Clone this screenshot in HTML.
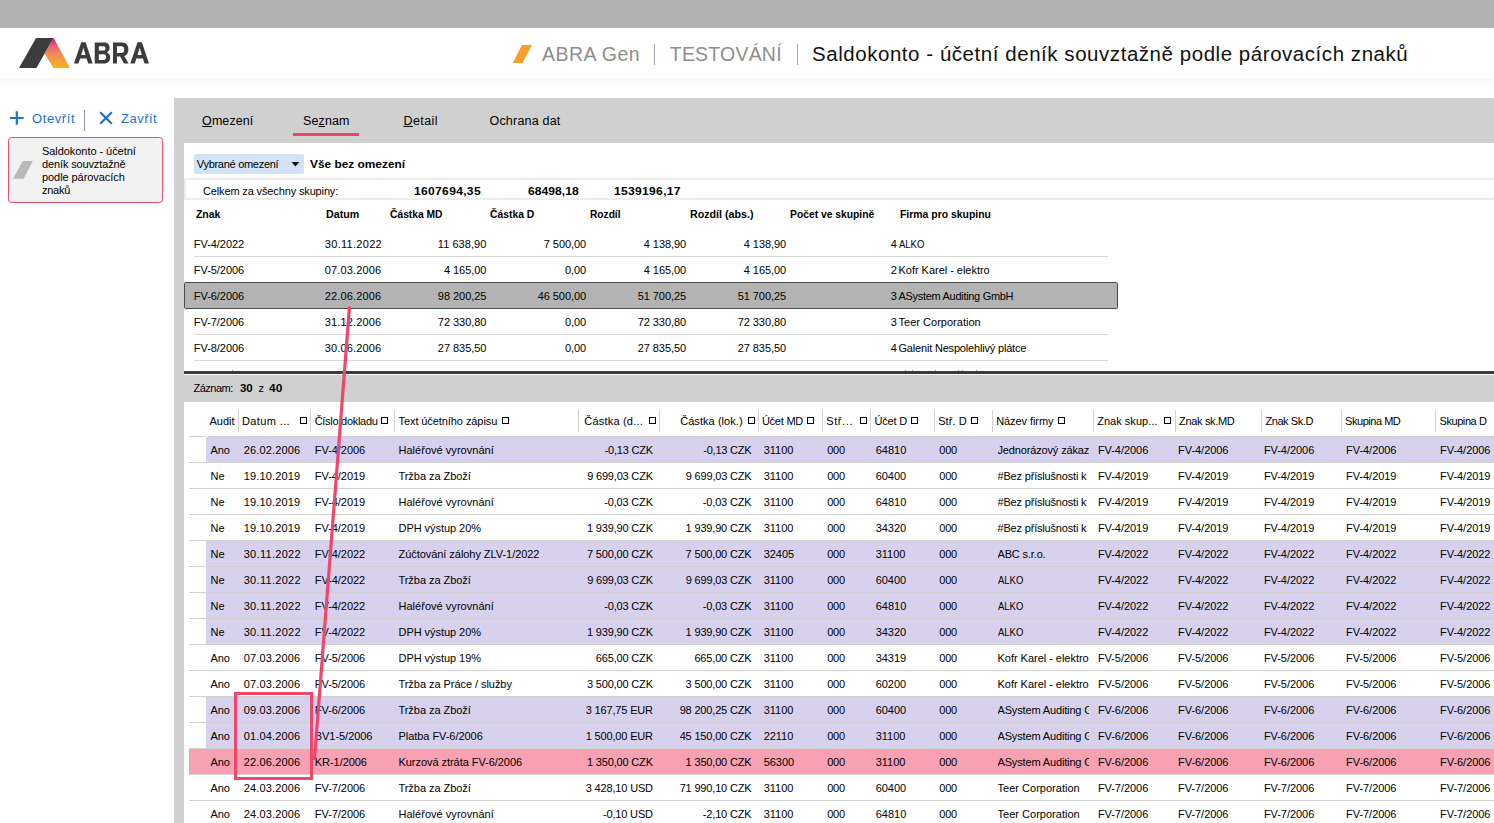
<!DOCTYPE html>
<html lang="cs"><head><meta charset="utf-8"><title>ABRA Gen - Saldokonto</title>
<style>
html,body{margin:0;padding:0;background:#fff;width:1494px;height:823px;overflow:hidden}
#w{width:1494px;height:823px;position:absolute;left:0;top:0;overflow:hidden;font-family:"Liberation Sans",sans-serif;font-size:11px;color:#000}
#s>div,#s>svg,#o>svg{position:absolute}
#t span{position:absolute;white-space:nowrap;line-height:1}
#t span.r{text-align:right}
#t b{font-weight:bold}
u{text-decoration:underline;text-underline-offset:1px}
</style></head><body><div id="w">
<div id="s">
<div style="left:0px;top:0px;width:1494px;height:28px;background:#b2b2b2;"></div>
<div style="left:0;top:78px;width:1494px;height:8px;background:linear-gradient(#f5f5f5,#f9f9f9 40%,#fcfcfc 75%,#fff)"></div>
<svg style="left:0;top:28px" width="180" height="50" viewBox="0 28 180 50">
<defs><linearGradient id="lg" gradientUnits="userSpaceOnUse" x1="0" y1="38" x2="0" y2="68"><stop offset="0" stop-color="#e5007e"/><stop offset="0.1" stop-color="#e72585"/><stop offset="0.3" stop-color="#ea6a74"/><stop offset="0.55" stop-color="#ef8c59"/><stop offset="1" stop-color="#f8b21a"/></linearGradient></defs>
<polygon points="36,38 53.6,38 36.4,68 19,68" fill="#3c3c3c"/>
<polygon points="53.6,38 70,68 53.4,68 44.6,53.4" fill="url(#lg)"/>
</svg>
<svg style="left:70px;top:36px" width="84" height="34" viewBox="70 36 84 34"><g fill="#3c3c3c" fill-rule="evenodd">
<path d="M74,63.6 L81.2,42.3 H85.6 L92.7,63.6 H88.2 L86.6,58.4 H80.1 L78.5,63.6 Z M81.2,54.9 H85.5 L83.4,47.8 Z"/>
<path d="M94.7,42.6 H104.5 C108,42.6 109.6,44.9 109.6,47.8 C109.6,50 108.6,51.6 106.8,52.5 C109,53.3 110.2,55.2 110.2,57.6 C110.2,61 108,63.6 104.2,63.6 H94.7 Z M98.8,46.2 H103.6 C105,46.2 105.5,47.2 105.5,48.4 C105.5,49.6 104.8,50.6 103.6,50.6 H98.8 Z M98.8,54.2 H104 C105.4,54.2 106.1,55.5 106.1,57.1 C106.1,58.8 105.3,60 103.9,60 H98.8 Z"/>
<path d="M113,42.6 H122.4 C126.2,42.6 128.4,45.4 128.4,49.5 C128.4,52.8 126.8,55.2 124.2,56.1 L128.7,63.6 H124 L120.1,56.6 H117 V63.6 H113 Z M117,46.2 H121.8 C123.4,46.2 124.2,47.6 124.2,49.5 C124.2,51.6 123.3,53 121.8,53 H117 Z"/>
<path transform="translate(56.3 0)" d="M74,63.6 L81.2,42.3 H85.6 L92.7,63.6 H88.2 L86.6,58.4 H80.1 L78.5,63.6 Z M81.2,54.9 H85.5 L83.4,47.8 Z"/>
</g></svg>
<svg style="left:510px;top:44px" width="24" height="20" viewBox="510 44 24 20"><polygon points="521.9,45 531.9,45 522.4,62.9 512.8,62.9" fill="#fc9c2e"/></svg>
<div style="left:654px;top:44px;width:1px;height:21px;background:#a3a3bd;"></div>
<div style="left:797px;top:44px;width:1px;height:21px;background:#a3a3bd;"></div>
<svg style="left:8px;top:108px" width="110" height="24" viewBox="8 108 110 24"><g stroke="#1f72d0" stroke-width="2.2" fill="none"><path d="M10 118H23.6M16.8 111.2V124.8"/><path d="M100.2 112.2L111.8 123.8M111.8 112.2L100.2 123.8"/></g></svg>
<div style="left:84px;top:110px;width:1px;height:21px;background:#8f8fc9;"></div>
<div style="left:8px;top:137px;width:153px;height:64px;background:#f2f2f2;border:1px solid #ea4c6c;border-radius:3.5px"></div>
<svg style="left:12px;top:160px" width="24" height="20" viewBox="12 160 24 20"><polygon points="22.6,161 32.9,161 23.6,178.8 13,178.8" fill="#b9b9b9"/></svg>
<div style="left:174px;top:98px;width:1320px;height:725px;background:#d0d0d0;"></div>
<div style="left:293px;top:133px;width:66px;height:3px;background:#ed4469;"></div>
<div style="left:184px;top:143px;width:1310px;height:232px;background:#fff;"></div>
<div style="left:194px;top:154px;width:110px;height:20px;background:#d3e3f5;border-radius:2px"></div>
<svg style="left:289px;top:160px" width="12" height="8" viewBox="289 160 12 8"><polygon points="291.5,162 299.3,162 295.4,166.5" fill="#111"/></svg>
<div style="left:184px;top:178px;width:1310px;height:2px;background:#edebec;"></div>
<div style="left:184px;top:198px;width:1310px;height:2px;background:#edebec;"></div>
<div style="left:184px;top:180px;width:2px;height:18px;background:#edebec;"></div>
<div style="left:194px;top:256px;width:914px;height:1px;background:#d8d8d8;"></div>
<div style="left:194px;top:282px;width:914px;height:1px;background:#d8d8d8;"></div>
<div style="left:184px;top:282px;width:932px;height:25px;background:#b3b3b3;border:1px solid #4a4a4a;border-radius:1.5px"></div>
<div style="left:194px;top:334px;width:914px;height:1px;background:#d8d8d8;"></div>
<div style="left:194px;top:360px;width:914px;height:1px;background:#d8d8d8;"></div>
<div style="left:194px;top:361px;width:914px;height:10px;overflow:hidden"><span style="position:absolute;left:0.3px;top:8.4px;font-size:11px;line-height:13px;white-space:nowrap">FV-9/2006</span><span style="position:absolute;left:131px;top:8.4px;font-size:11px;line-height:13px;white-space:nowrap">30.06.2006</span><span style="position:absolute;left:705px;top:8.4px;font-size:11px;line-height:13px;white-space:nowrap">Kofr Karel - elektro</span></div>
<div style="left:232px;top:370px;width:1px;height:1px;background:#9a9a9a;"></div>
<div style="left:905px;top:370px;width:1px;height:1px;background:#9a9a9a;"></div>
<div style="left:912px;top:370px;width:1px;height:1px;background:#9a9a9a;"></div>
<div style="left:935px;top:370px;width:1px;height:1px;background:#9a9a9a;"></div>
<div style="left:958px;top:370px;width:1px;height:1px;background:#9a9a9a;"></div>
<div style="left:962px;top:370px;width:1px;height:1px;background:#9a9a9a;"></div>
<div style="left:976px;top:370px;width:1px;height:1px;background:#9a9a9a;"></div>
<div style="left:184px;top:371px;width:1310px;height:3px;background:#3b3b3b;"></div>
<div style="left:184px;top:402px;width:1310px;height:421px;background:#fff;"></div>
<div style="left:238px;top:410px;width:1px;height:22px;background:#d2d2d2;"></div>
<div style="left:310px;top:410px;width:1px;height:22px;background:#d2d2d2;"></div>
<div style="left:394px;top:410px;width:1px;height:22px;background:#d2d2d2;"></div>
<div style="left:578px;top:410px;width:1px;height:22px;background:#d2d2d2;"></div>
<div style="left:659px;top:410px;width:1px;height:22px;background:#d2d2d2;"></div>
<div style="left:758px;top:410px;width:1px;height:22px;background:#d2d2d2;"></div>
<div style="left:822px;top:410px;width:1px;height:22px;background:#d2d2d2;"></div>
<div style="left:870px;top:410px;width:1px;height:22px;background:#d2d2d2;"></div>
<div style="left:934px;top:410px;width:1px;height:22px;background:#d2d2d2;"></div>
<div style="left:992px;top:410px;width:1px;height:22px;background:#d2d2d2;"></div>
<div style="left:1093px;top:410px;width:1px;height:22px;background:#d2d2d2;"></div>
<div style="left:1175px;top:410px;width:1px;height:22px;background:#d2d2d2;"></div>
<div style="left:1261px;top:410px;width:1px;height:22px;background:#d2d2d2;"></div>
<div style="left:1341px;top:410px;width:1px;height:22px;background:#d2d2d2;"></div>
<div style="left:1435px;top:410px;width:1px;height:22px;background:#d2d2d2;"></div>
<div style="left:300px;top:417px;width:5px;height:5px;border:1px solid #000;background:#fff"></div>
<div style="left:381px;top:417px;width:5px;height:5px;border:1px solid #000;background:#fff"></div>
<div style="left:502px;top:417px;width:5px;height:5px;border:1px solid #000;background:#fff"></div>
<div style="left:649px;top:417px;width:5px;height:5px;border:1px solid #000;background:#fff"></div>
<div style="left:748px;top:417px;width:5px;height:5px;border:1px solid #000;background:#fff"></div>
<div style="left:807px;top:417px;width:5px;height:5px;border:1px solid #000;background:#fff"></div>
<div style="left:860px;top:417px;width:5px;height:5px;border:1px solid #000;background:#fff"></div>
<div style="left:911px;top:417px;width:5px;height:5px;border:1px solid #000;background:#fff"></div>
<div style="left:971px;top:417px;width:5px;height:5px;border:1px solid #000;background:#fff"></div>
<div style="left:1058px;top:417px;width:5px;height:5px;border:1px solid #000;background:#fff"></div>
<div style="left:1164px;top:417px;width:5px;height:5px;border:1px solid #000;background:#fff"></div>
<div style="left:189px;top:436px;width:17px;height:1px;background:#cfcfcf;"></div>
<div style="left:208px;top:436px;width:1286px;height:1px;background:#cfcfcf;"></div>
<div style="left:206px;top:437px;width:1288px;height:25px;background:#d7d1ed;"></div>
<div style="left:189px;top:462px;width:1305px;height:1px;background:#d1d1d1;"></div>
<div style="left:189px;top:488px;width:1305px;height:1px;background:#d1d1d1;"></div>
<div style="left:189px;top:514px;width:1305px;height:1px;background:#d1d1d1;"></div>
<div style="left:189px;top:540px;width:1305px;height:1px;background:#d1d1d1;"></div>
<div style="left:206px;top:541px;width:1288px;height:25px;background:#d7d1ed;"></div>
<div style="left:189px;top:566px;width:1305px;height:1px;background:#d1d1d1;"></div>
<div style="left:206px;top:567px;width:1288px;height:25px;background:#d7d1ed;"></div>
<div style="left:189px;top:592px;width:1305px;height:1px;background:#d1d1d1;"></div>
<div style="left:206px;top:593px;width:1288px;height:25px;background:#d7d1ed;"></div>
<div style="left:189px;top:618px;width:1305px;height:1px;background:#d1d1d1;"></div>
<div style="left:206px;top:619px;width:1288px;height:25px;background:#d7d1ed;"></div>
<div style="left:189px;top:644px;width:1305px;height:1px;background:#d1d1d1;"></div>
<div style="left:189px;top:670px;width:1305px;height:1px;background:#d1d1d1;"></div>
<div style="left:189px;top:696px;width:1305px;height:1px;background:#d1d1d1;"></div>
<div style="left:206px;top:697px;width:1288px;height:25px;background:#d7d1ed;"></div>
<div style="left:189px;top:722px;width:1305px;height:1px;background:#d1d1d1;"></div>
<div style="left:206px;top:723px;width:1288px;height:25px;background:#d7d1ed;"></div>
<div style="left:189px;top:748px;width:1305px;height:1px;background:#d1d1d1;"></div>
<div style="left:189px;top:749px;width:1305px;height:25px;background:#f7a1b2;"></div>
<div style="left:189px;top:774px;width:1305px;height:1px;background:#d1d1d1;"></div>
<div style="left:189px;top:800px;width:1305px;height:1px;background:#d1d1d1;"></div>
<div style="left:189px;top:826px;width:1305px;height:1px;background:#d1d1d1;"></div>
</div>
<div id="t">
<span style="top:45px;left:541.90px;font-size:19.5px;color:#8e8e8e;letter-spacing:0.486px">ABRA Gen</span>
<span style="top:45px;left:669.80px;font-size:19.5px;color:#8e8e8e;letter-spacing:0.200px">TESTOVÁNÍ</span>
<span style="top:45px;left:812.25px;font-size:19.5px;color:#111;letter-spacing:0.530px;transform:scaleX(1.05);transform-origin:0 0">Saldokonto - účetní deník souvztažně podle párovacích znaků</span>
<span style="top:112px;left:32.00px;font-size:13px;color:#1f72d0;letter-spacing:0.600px">Otevřít</span>
<span style="top:112px;left:121.00px;font-size:13px;color:#1f72d0;letter-spacing:0.500px">Zavřít</span>
<span style="top:146px;left:42.00px;letter-spacing:-0.056px">Saldokonto - účetní</span>
<span style="top:159px;left:42.00px;letter-spacing:-0.133px">deník souvztažně</span>
<span style="top:172px;left:42.00px;letter-spacing:-0.067px">podle párovacích</span>
<span style="top:185px;left:42.00px;letter-spacing:-0.250px">znaků</span>
<span style="top:115px;left:202.10px;font-size:12.5px;letter-spacing:0.067px"><u>O</u>mezení</span>
<span style="top:115px;left:303.00px;font-size:12.5px;letter-spacing:0.120px">Se<u>z</u>nam</span>
<span style="top:115px;left:403.50px;font-size:12.5px;letter-spacing:0.400px"><u>D</u>etail</span>
<span style="top:115px;left:489.50px;font-size:12.5px;letter-spacing:0.200px">Ochrana dat</span>
<span style="top:159px;left:196.80px;letter-spacing:-0.286px">Vybrané omezení</span>
<span style="top:159px;left:309.50px;font-weight:bold;transform:scaleX(1.08);transform-origin:0 0">Vše bez omezení</span>
<span style="top:186px;left:203.00px;letter-spacing:-0.140px">Celkem za všechny skupiny:</span>
<span style="top:186px;left:414.10px;font-weight:bold;letter-spacing:0.273px;transform:scaleX(1.1);transform-origin:0 0">1607694,35</span>
<span style="top:186px;left:528.20px;font-weight:bold;letter-spacing:0.026px;transform:scaleX(1.1);transform-origin:0 0">68498,18</span>
<span style="top:186px;left:613.80px;font-weight:bold;letter-spacing:0.263px;transform:scaleX(1.1);transform-origin:0 0">1539196,17</span>
<span style="top:210px;left:195.50px;font-size:10px;font-weight:bold;transform:scaleX(1.043);transform-origin:0 0">Znak</span>
<span style="top:210px;left:325.50px;font-size:10px;font-weight:bold;transform:scaleX(1.067);transform-origin:0 0">Datum</span>
<span style="top:210px;left:389.90px;font-size:10px;font-weight:bold;transform:scaleX(1.027);transform-origin:0 0">Částka MD</span>
<span style="top:210px;left:489.90px;font-size:10px;font-weight:bold;transform:scaleX(1.033);transform-origin:0 0">Částka D</span>
<span style="top:210px;left:589.80px;font-size:10px;font-weight:bold;transform:scaleX(1.017);transform-origin:0 0">Rozdíl</span>
<span style="top:210px;left:689.90px;font-size:10px;font-weight:bold;transform:scaleX(1.069);transform-origin:0 0">Rozdíl (abs.)</span>
<span style="top:210px;left:790.00px;font-size:10px;font-weight:bold;transform:scaleX(1.031);transform-origin:0 0">Počet ve skupině</span>
<span style="top:210px;left:899.50px;font-size:10px;font-weight:bold;transform:scaleX(1.042);transform-origin:0 0">Firma pro skupinu</span>
<span style="top:239px;left:193.80px;letter-spacing:-0.050px">FV-4/2022</span>
<span style="top:239px;left:324.80px;letter-spacing:0.300px">30.11.2022</span>
<span style="top:239px;right:1007.54px;letter-spacing:0.062px">11 638,90</span>
<span style="top:239px;right:907.85px;letter-spacing:-0.050px">7 500,00</span>
<span style="top:239px;right:807.85px;letter-spacing:-0.050px">4 138,90</span>
<span style="top:239px;right:707.85px;letter-spacing:-0.050px">4 138,90</span>
<span style="top:239px;left:890.70px;letter-spacing:-0.050px">4</span>
<span style="top:239px;left:898.50px;transform:scaleX(0.862);transform-origin:0 0">ALKO</span>
<span style="top:265px;left:193.80px;letter-spacing:-0.050px">FV-5/2006</span>
<span style="top:265px;left:324.80px;letter-spacing:0.150px">07.03.2006</span>
<span style="top:265px;right:1007.65px;letter-spacing:-0.050px">4 165,00</span>
<span style="top:265px;right:907.85px;letter-spacing:-0.050px">0,00</span>
<span style="top:265px;right:807.85px;letter-spacing:-0.050px">4 165,00</span>
<span style="top:265px;right:707.85px;letter-spacing:-0.050px">4 165,00</span>
<span style="top:265px;left:890.70px;letter-spacing:-0.050px">2</span>
<span style="top:265px;left:898.50px;letter-spacing:-0.026px">Kofr Karel - elektro</span>
<span style="top:291px;left:193.80px;letter-spacing:-0.050px">FV-6/2006</span>
<span style="top:291px;left:324.80px;letter-spacing:0.150px">22.06.2006</span>
<span style="top:291px;right:1007.65px;letter-spacing:-0.050px">98 200,25</span>
<span style="top:291px;right:907.85px;letter-spacing:-0.050px">46 500,00</span>
<span style="top:291px;right:807.85px;letter-spacing:-0.050px">51 700,25</span>
<span style="top:291px;right:707.85px;letter-spacing:-0.050px">51 700,25</span>
<span style="top:291px;left:890.70px;letter-spacing:-0.050px">3</span>
<span style="top:291px;left:898.50px;letter-spacing:-0.300px">ASystem Auditing GmbH</span>
<span style="top:317px;left:193.80px;letter-spacing:-0.050px">FV-7/2006</span>
<span style="top:317px;left:324.80px;letter-spacing:0.150px">31.12.2006</span>
<span style="top:317px;right:1007.65px;letter-spacing:-0.050px">72 330,80</span>
<span style="top:317px;right:907.85px;letter-spacing:-0.050px">0,00</span>
<span style="top:317px;right:807.85px;letter-spacing:-0.050px">72 330,80</span>
<span style="top:317px;right:707.85px;letter-spacing:-0.050px">72 330,80</span>
<span style="top:317px;left:890.70px;letter-spacing:-0.050px">3</span>
<span style="top:317px;left:898.50px;letter-spacing:0.020px">Teer Corporation</span>
<span style="top:343px;left:193.80px;letter-spacing:-0.050px">FV-8/2006</span>
<span style="top:343px;left:324.80px;letter-spacing:0.150px">30.06.2006</span>
<span style="top:343px;right:1007.65px;letter-spacing:-0.050px">27 835,50</span>
<span style="top:343px;right:907.85px;letter-spacing:-0.050px">0,00</span>
<span style="top:343px;right:807.85px;letter-spacing:-0.050px">27 835,50</span>
<span style="top:343px;right:707.85px;letter-spacing:-0.050px">27 835,50</span>
<span style="top:343px;left:890.70px;letter-spacing:-0.050px">4</span>
<span style="top:343px;left:898.50px;letter-spacing:-0.185px">Galenit Nespolehlivý plátce</span>
<span style="top:383px;left:193.50px;letter-spacing:-0.500px">Záznam:</span>
<span style="top:383px;left:239.50px;font-weight:bold;transform:scaleX(1.042);transform-origin:0 0">30</span>
<span style="top:383px;left:258.50px;letter-spacing:-0.500px">z</span>
<span style="top:383px;left:268.50px;font-weight:bold;transform:scaleX(1.083);transform-origin:0 0">40</span>
<span style="top:416px;left:209.50px">Audit</span>
<span style="top:416px;left:242.00px;letter-spacing:0.375px">Datum ...</span>
<span style="top:416px;left:314.70px;letter-spacing:-0.292px">Číslo dokladu</span>
<span style="top:416px;left:398.50px;letter-spacing:-0.079px">Text účetního zápisu</span>
<span style="top:416px;left:584.30px;letter-spacing:0.200px">Částka (d...</span>
<span style="top:416px;left:680.20px;letter-spacing:0.058px">Částka (lok.)</span>
<span style="top:416px;left:761.90px;letter-spacing:-0.233px">Účet MD</span>
<span style="top:416px;left:826.20px;letter-spacing:0.620px">Stř...</span>
<span style="top:416px;left:874.50px;letter-spacing:-0.200px">Účet D</span>
<span style="top:416px;left:938.20px;letter-spacing:0.100px">Stř. D</span>
<span style="top:416px;left:996.20px;letter-spacing:-0.070px">Název firmy</span>
<span style="top:416px;left:1097.20px;letter-spacing:0.027px">Znak skup...</span>
<span style="top:416px;left:1179.10px;letter-spacing:-0.333px">Znak sk.MD</span>
<span style="top:416px;left:1265.40px;letter-spacing:-0.425px">Znak Sk.D</span>
<span style="top:416px;left:1345.10px;letter-spacing:-0.467px">Skupina MD</span>
<span style="top:416px;left:1439.50px;letter-spacing:-0.425px">Skupina D</span>
<span style="top:445px;left:210.50px;letter-spacing:-0.050px">Ano</span>
<span style="top:445px;left:243.70px;letter-spacing:0.150px">26.02.2006</span>
<span style="top:445px;left:314.80px;letter-spacing:-0.050px">FV-4/2006</span>
<span style="top:445px;left:398.50px;letter-spacing:0.029px">Haléřové vyrovnání</span>
<span style="top:445px;right:841.23px;letter-spacing:-0.225px">-0,13 CZK</span>
<span style="top:445px;right:742.62px;letter-spacing:-0.225px">-0,13 CZK</span>
<span style="top:445px;left:763.70px">31100</span>
<span style="top:445px;left:827.20px;letter-spacing:-0.250px">000</span>
<span style="top:445px;left:875.70px">64810</span>
<span style="top:445px;left:939.30px;letter-spacing:-0.250px">000</span>
<span style="top:445px;left:997.50px;letter-spacing:-0.150px;width:91.6px;overflow:hidden">Jednorázový zákaz</span>
<span style="top:445px;left:1097.90px;letter-spacing:-0.050px">FV-4/2006</span>
<span style="top:445px;left:1178.10px;letter-spacing:-0.050px">FV-4/2006</span>
<span style="top:445px;left:1263.90px;letter-spacing:-0.050px">FV-4/2006</span>
<span style="top:445px;left:1346.10px;letter-spacing:-0.050px">FV-4/2006</span>
<span style="top:445px;left:1440.10px;letter-spacing:-0.050px">FV-4/2006</span>
<span style="top:471px;left:210.50px;letter-spacing:-0.050px">Ne</span>
<span style="top:471px;left:243.70px;letter-spacing:0.150px">19.10.2019</span>
<span style="top:471px;left:314.80px;letter-spacing:-0.050px">FV-4/2019</span>
<span style="top:471px;left:398.50px;letter-spacing:-0.050px">Tržba za Zboží</span>
<span style="top:471px;right:841.19px;letter-spacing:-0.191px">9 699,03 CZK</span>
<span style="top:471px;right:742.59px;letter-spacing:-0.191px">9 699,03 CZK</span>
<span style="top:471px;left:763.70px">31100</span>
<span style="top:471px;left:827.20px;letter-spacing:-0.250px">000</span>
<span style="top:471px;left:875.70px;letter-spacing:-0.050px">60400</span>
<span style="top:471px;left:939.30px;letter-spacing:-0.250px">000</span>
<span style="top:471px;left:997.50px;letter-spacing:-0.183px;width:91.6px;overflow:hidden">#Bez příslušnosti k</span>
<span style="top:471px;left:1097.90px;letter-spacing:-0.050px">FV-4/2019</span>
<span style="top:471px;left:1178.10px;letter-spacing:-0.050px">FV-4/2019</span>
<span style="top:471px;left:1263.90px;letter-spacing:-0.050px">FV-4/2019</span>
<span style="top:471px;left:1346.10px;letter-spacing:-0.050px">FV-4/2019</span>
<span style="top:471px;left:1440.10px;letter-spacing:-0.050px">FV-4/2019</span>
<span style="top:497px;left:210.50px;letter-spacing:-0.050px">Ne</span>
<span style="top:497px;left:243.70px;letter-spacing:0.150px">19.10.2019</span>
<span style="top:497px;left:314.80px;letter-spacing:-0.050px">FV-4/2019</span>
<span style="top:497px;left:398.50px;letter-spacing:0.029px">Haléřové vyrovnání</span>
<span style="top:497px;right:841.17px;letter-spacing:-0.170px">-0,03 CZK</span>
<span style="top:497px;right:742.57px;letter-spacing:-0.170px">-0,03 CZK</span>
<span style="top:497px;left:763.70px">31100</span>
<span style="top:497px;left:827.20px;letter-spacing:-0.250px">000</span>
<span style="top:497px;left:875.70px">64810</span>
<span style="top:497px;left:939.30px;letter-spacing:-0.250px">000</span>
<span style="top:497px;left:997.50px;letter-spacing:-0.183px;width:91.6px;overflow:hidden">#Bez příslušnosti k</span>
<span style="top:497px;left:1097.90px;letter-spacing:-0.050px">FV-4/2019</span>
<span style="top:497px;left:1178.10px;letter-spacing:-0.050px">FV-4/2019</span>
<span style="top:497px;left:1263.90px;letter-spacing:-0.050px">FV-4/2019</span>
<span style="top:497px;left:1346.10px;letter-spacing:-0.050px">FV-4/2019</span>
<span style="top:497px;left:1440.10px;letter-spacing:-0.050px">FV-4/2019</span>
<span style="top:523px;left:210.50px;letter-spacing:-0.050px">Ne</span>
<span style="top:523px;left:243.70px;letter-spacing:0.150px">19.10.2019</span>
<span style="top:523px;left:314.80px;letter-spacing:-0.050px">FV-4/2019</span>
<span style="top:523px;left:398.50px;letter-spacing:-0.050px">DPH výstup 20%</span>
<span style="top:523px;right:841.17px;letter-spacing:-0.170px">1 939,90 CZK</span>
<span style="top:523px;right:742.57px;letter-spacing:-0.170px">1 939,90 CZK</span>
<span style="top:523px;left:763.70px">31100</span>
<span style="top:523px;left:827.20px;letter-spacing:-0.250px">000</span>
<span style="top:523px;left:875.70px;letter-spacing:-0.050px">34320</span>
<span style="top:523px;left:939.30px;letter-spacing:-0.250px">000</span>
<span style="top:523px;left:997.50px;letter-spacing:-0.183px;width:91.6px;overflow:hidden">#Bez příslušnosti k</span>
<span style="top:523px;left:1097.90px;letter-spacing:-0.050px">FV-4/2019</span>
<span style="top:523px;left:1178.10px;letter-spacing:-0.050px">FV-4/2019</span>
<span style="top:523px;left:1263.90px;letter-spacing:-0.050px">FV-4/2019</span>
<span style="top:523px;left:1346.10px;letter-spacing:-0.050px">FV-4/2019</span>
<span style="top:523px;left:1440.10px;letter-spacing:-0.050px">FV-4/2019</span>
<span style="top:549px;left:210.50px;letter-spacing:-0.050px">Ne</span>
<span style="top:549px;left:243.70px;letter-spacing:0.300px">30.11.2022</span>
<span style="top:549px;left:314.80px;letter-spacing:-0.050px">FV-4/2022</span>
<span style="top:549px;left:398.50px;letter-spacing:-0.050px">Zúčtování zálohy ZLV-1/2022</span>
<span style="top:549px;right:841.17px;letter-spacing:-0.170px">7 500,00 CZK</span>
<span style="top:549px;right:742.57px;letter-spacing:-0.170px">7 500,00 CZK</span>
<span style="top:549px;left:763.70px;letter-spacing:-0.050px">32405</span>
<span style="top:549px;left:827.20px;letter-spacing:-0.250px">000</span>
<span style="top:549px;left:875.70px">31100</span>
<span style="top:549px;left:939.30px;letter-spacing:-0.250px">000</span>
<span style="top:549px;left:997.50px;letter-spacing:-0.150px;width:91.6px;overflow:hidden">ABC s.r.o.</span>
<span style="top:549px;left:1097.90px;letter-spacing:-0.050px">FV-4/2022</span>
<span style="top:549px;left:1178.10px;letter-spacing:-0.050px">FV-4/2022</span>
<span style="top:549px;left:1263.90px;letter-spacing:-0.050px">FV-4/2022</span>
<span style="top:549px;left:1346.10px;letter-spacing:-0.050px">FV-4/2022</span>
<span style="top:549px;left:1440.10px;letter-spacing:-0.050px">FV-4/2022</span>
<span style="top:575px;left:210.50px;letter-spacing:-0.050px">Ne</span>
<span style="top:575px;left:243.70px;letter-spacing:0.300px">30.11.2022</span>
<span style="top:575px;left:314.80px;letter-spacing:-0.050px">FV-4/2022</span>
<span style="top:575px;left:398.50px;letter-spacing:-0.050px">Tržba za Zboží</span>
<span style="top:575px;right:841.19px;letter-spacing:-0.191px">9 699,03 CZK</span>
<span style="top:575px;right:742.59px;letter-spacing:-0.191px">9 699,03 CZK</span>
<span style="top:575px;left:763.70px">31100</span>
<span style="top:575px;left:827.20px;letter-spacing:-0.250px">000</span>
<span style="top:575px;left:875.70px;letter-spacing:-0.050px">60400</span>
<span style="top:575px;left:939.30px;letter-spacing:-0.250px">000</span>
<span style="top:575px;left:997.50px;transform:scaleX(0.862);transform-origin:0 0;width:91.6px;overflow:hidden">ALKO</span>
<span style="top:575px;left:1097.90px;letter-spacing:-0.050px">FV-4/2022</span>
<span style="top:575px;left:1178.10px;letter-spacing:-0.050px">FV-4/2022</span>
<span style="top:575px;left:1263.90px;letter-spacing:-0.050px">FV-4/2022</span>
<span style="top:575px;left:1346.10px;letter-spacing:-0.050px">FV-4/2022</span>
<span style="top:575px;left:1440.10px;letter-spacing:-0.050px">FV-4/2022</span>
<span style="top:601px;left:210.50px;letter-spacing:-0.050px">Ne</span>
<span style="top:601px;left:243.70px;letter-spacing:0.300px">30.11.2022</span>
<span style="top:601px;left:314.80px;letter-spacing:-0.050px">FV-4/2022</span>
<span style="top:601px;left:398.50px;letter-spacing:0.029px">Haléřové vyrovnání</span>
<span style="top:601px;right:841.17px;letter-spacing:-0.170px">-0,03 CZK</span>
<span style="top:601px;right:742.57px;letter-spacing:-0.170px">-0,03 CZK</span>
<span style="top:601px;left:763.70px">31100</span>
<span style="top:601px;left:827.20px;letter-spacing:-0.250px">000</span>
<span style="top:601px;left:875.70px">64810</span>
<span style="top:601px;left:939.30px;letter-spacing:-0.250px">000</span>
<span style="top:601px;left:997.50px;transform:scaleX(0.862);transform-origin:0 0;width:91.6px;overflow:hidden">ALKO</span>
<span style="top:601px;left:1097.90px;letter-spacing:-0.050px">FV-4/2022</span>
<span style="top:601px;left:1178.10px;letter-spacing:-0.050px">FV-4/2022</span>
<span style="top:601px;left:1263.90px;letter-spacing:-0.050px">FV-4/2022</span>
<span style="top:601px;left:1346.10px;letter-spacing:-0.050px">FV-4/2022</span>
<span style="top:601px;left:1440.10px;letter-spacing:-0.050px">FV-4/2022</span>
<span style="top:627px;left:210.50px;letter-spacing:-0.050px">Ne</span>
<span style="top:627px;left:243.70px;letter-spacing:0.300px">30.11.2022</span>
<span style="top:627px;left:314.80px;letter-spacing:-0.050px">FV-4/2022</span>
<span style="top:627px;left:398.50px;letter-spacing:-0.050px">DPH výstup 20%</span>
<span style="top:627px;right:841.17px;letter-spacing:-0.170px">1 939,90 CZK</span>
<span style="top:627px;right:742.57px;letter-spacing:-0.170px">1 939,90 CZK</span>
<span style="top:627px;left:763.70px">31100</span>
<span style="top:627px;left:827.20px;letter-spacing:-0.250px">000</span>
<span style="top:627px;left:875.70px;letter-spacing:-0.050px">34320</span>
<span style="top:627px;left:939.30px;letter-spacing:-0.250px">000</span>
<span style="top:627px;left:997.50px;transform:scaleX(0.862);transform-origin:0 0;width:91.6px;overflow:hidden">ALKO</span>
<span style="top:627px;left:1097.90px;letter-spacing:-0.050px">FV-4/2022</span>
<span style="top:627px;left:1178.10px;letter-spacing:-0.050px">FV-4/2022</span>
<span style="top:627px;left:1263.90px;letter-spacing:-0.050px">FV-4/2022</span>
<span style="top:627px;left:1346.10px;letter-spacing:-0.050px">FV-4/2022</span>
<span style="top:627px;left:1440.10px;letter-spacing:-0.050px">FV-4/2022</span>
<span style="top:653px;left:210.50px;letter-spacing:-0.050px">Ano</span>
<span style="top:653px;left:243.70px;letter-spacing:0.150px">07.03.2006</span>
<span style="top:653px;left:314.80px;letter-spacing:-0.050px">FV-5/2006</span>
<span style="top:653px;left:398.50px;letter-spacing:-0.050px">DPH výstup 19%</span>
<span style="top:653px;right:841.17px;letter-spacing:-0.170px">665,00 CZK</span>
<span style="top:653px;right:742.57px;letter-spacing:-0.170px">665,00 CZK</span>
<span style="top:653px;left:763.70px">31100</span>
<span style="top:653px;left:827.20px;letter-spacing:-0.250px">000</span>
<span style="top:653px;left:875.70px;letter-spacing:-0.050px">34319</span>
<span style="top:653px;left:939.30px;letter-spacing:-0.250px">000</span>
<span style="top:653px;left:997.50px;letter-spacing:-0.026px;width:91.6px;overflow:hidden">Kofr Karel - elektro</span>
<span style="top:653px;left:1097.90px;letter-spacing:-0.050px">FV-5/2006</span>
<span style="top:653px;left:1178.10px;letter-spacing:-0.050px">FV-5/2006</span>
<span style="top:653px;left:1263.90px;letter-spacing:-0.050px">FV-5/2006</span>
<span style="top:653px;left:1346.10px;letter-spacing:-0.050px">FV-5/2006</span>
<span style="top:653px;left:1440.10px;letter-spacing:-0.050px">FV-5/2006</span>
<span style="top:679px;left:210.50px;letter-spacing:-0.050px">Ano</span>
<span style="top:679px;left:243.70px;letter-spacing:0.150px">07.03.2006</span>
<span style="top:679px;left:314.80px;letter-spacing:-0.050px">FV-5/2006</span>
<span style="top:679px;left:398.50px;letter-spacing:-0.050px">Tržba za Práce / služby</span>
<span style="top:679px;right:841.17px;letter-spacing:-0.170px">3 500,00 CZK</span>
<span style="top:679px;right:742.57px;letter-spacing:-0.170px">3 500,00 CZK</span>
<span style="top:679px;left:763.70px">31100</span>
<span style="top:679px;left:827.20px;letter-spacing:-0.250px">000</span>
<span style="top:679px;left:875.70px;letter-spacing:-0.050px">60200</span>
<span style="top:679px;left:939.30px;letter-spacing:-0.250px">000</span>
<span style="top:679px;left:997.50px;letter-spacing:-0.026px;width:91.6px;overflow:hidden">Kofr Karel - elektro</span>
<span style="top:679px;left:1097.90px;letter-spacing:-0.050px">FV-5/2006</span>
<span style="top:679px;left:1178.10px;letter-spacing:-0.050px">FV-5/2006</span>
<span style="top:679px;left:1263.90px;letter-spacing:-0.050px">FV-5/2006</span>
<span style="top:679px;left:1346.10px;letter-spacing:-0.050px">FV-5/2006</span>
<span style="top:679px;left:1440.10px;letter-spacing:-0.050px">FV-5/2006</span>
<span style="top:705px;left:210.50px;letter-spacing:-0.050px">Ano</span>
<span style="top:705px;left:243.70px;letter-spacing:0.150px">09.03.2006</span>
<span style="top:705px;left:314.80px;letter-spacing:-0.050px">FV-6/2006</span>
<span style="top:705px;left:398.50px;letter-spacing:-0.050px">Tržba za Zboží</span>
<span style="top:705px;right:841.17px;letter-spacing:-0.170px">3 167,75 EUR</span>
<span style="top:705px;right:742.57px;letter-spacing:-0.170px">98 200,25 CZK</span>
<span style="top:705px;left:763.70px">31100</span>
<span style="top:705px;left:827.20px;letter-spacing:-0.250px">000</span>
<span style="top:705px;left:875.70px;letter-spacing:-0.050px">60400</span>
<span style="top:705px;left:939.30px;letter-spacing:-0.250px">000</span>
<span style="top:705px;left:997.50px;letter-spacing:-0.150px;width:91.6px;overflow:hidden">ASystem Auditing G</span>
<span style="top:705px;left:1097.90px;letter-spacing:-0.050px">FV-6/2006</span>
<span style="top:705px;left:1178.10px;letter-spacing:-0.050px">FV-6/2006</span>
<span style="top:705px;left:1263.90px;letter-spacing:-0.050px">FV-6/2006</span>
<span style="top:705px;left:1346.10px;letter-spacing:-0.050px">FV-6/2006</span>
<span style="top:705px;left:1440.10px;letter-spacing:-0.050px">FV-6/2006</span>
<span style="top:731px;left:210.50px;letter-spacing:-0.050px">Ano</span>
<span style="top:731px;left:243.70px;letter-spacing:0.150px">01.04.2006</span>
<span style="top:731px;left:314.80px;letter-spacing:-0.050px">BV1-5/2006</span>
<span style="top:731px;left:398.50px;letter-spacing:-0.050px">Platba FV-6/2006</span>
<span style="top:731px;right:841.17px;letter-spacing:-0.170px">1 500,00 EUR</span>
<span style="top:731px;right:742.57px;letter-spacing:-0.170px">45 150,00 CZK</span>
<span style="top:731px;left:763.70px;letter-spacing:-0.050px">22110</span>
<span style="top:731px;left:827.20px;letter-spacing:-0.250px">000</span>
<span style="top:731px;left:875.70px">31100</span>
<span style="top:731px;left:939.30px;letter-spacing:-0.250px">000</span>
<span style="top:731px;left:997.50px;letter-spacing:-0.150px;width:91.6px;overflow:hidden">ASystem Auditing G</span>
<span style="top:731px;left:1097.90px;letter-spacing:-0.050px">FV-6/2006</span>
<span style="top:731px;left:1178.10px;letter-spacing:-0.050px">FV-6/2006</span>
<span style="top:731px;left:1263.90px;letter-spacing:-0.050px">FV-6/2006</span>
<span style="top:731px;left:1346.10px;letter-spacing:-0.050px">FV-6/2006</span>
<span style="top:731px;left:1440.10px;letter-spacing:-0.050px">FV-6/2006</span>
<span style="top:757px;left:210.50px;letter-spacing:-0.050px">Ano</span>
<span style="top:757px;left:243.70px;letter-spacing:0.150px">22.06.2006</span>
<span style="top:757px;left:314.80px;letter-spacing:-0.050px">KR-1/2006</span>
<span style="top:757px;left:398.50px;letter-spacing:-0.050px">Kurzová ztráta FV-6/2006</span>
<span style="top:757px;right:841.17px;letter-spacing:-0.170px">1 350,00 CZK</span>
<span style="top:757px;right:742.57px;letter-spacing:-0.170px">1 350,00 CZK</span>
<span style="top:757px;left:763.70px;letter-spacing:-0.050px">56300</span>
<span style="top:757px;left:827.20px;letter-spacing:-0.250px">000</span>
<span style="top:757px;left:875.70px">31100</span>
<span style="top:757px;left:939.30px;letter-spacing:-0.250px">000</span>
<span style="top:757px;left:997.50px;letter-spacing:-0.150px;width:91.6px;overflow:hidden">ASystem Auditing G</span>
<span style="top:757px;left:1097.90px;letter-spacing:-0.050px">FV-6/2006</span>
<span style="top:757px;left:1178.10px;letter-spacing:-0.050px">FV-6/2006</span>
<span style="top:757px;left:1263.90px;letter-spacing:-0.050px">FV-6/2006</span>
<span style="top:757px;left:1346.10px;letter-spacing:-0.050px">FV-6/2006</span>
<span style="top:757px;left:1440.10px;letter-spacing:-0.050px">FV-6/2006</span>
<span style="top:783px;left:210.50px;letter-spacing:-0.050px">Ano</span>
<span style="top:783px;left:243.70px;letter-spacing:0.150px">24.03.2006</span>
<span style="top:783px;left:314.80px;letter-spacing:-0.050px">FV-7/2006</span>
<span style="top:783px;left:398.50px;letter-spacing:-0.050px">Tržba za Zboží</span>
<span style="top:783px;right:841.17px;letter-spacing:-0.170px">3 428,10 USD</span>
<span style="top:783px;right:742.57px;letter-spacing:-0.170px">71 990,10 CZK</span>
<span style="top:783px;left:763.70px">31100</span>
<span style="top:783px;left:827.20px;letter-spacing:-0.250px">000</span>
<span style="top:783px;left:875.70px;letter-spacing:-0.050px">60400</span>
<span style="top:783px;left:939.30px;letter-spacing:-0.250px">000</span>
<span style="top:783px;left:997.50px;letter-spacing:0.020px;width:91.6px;overflow:hidden">Teer Corporation</span>
<span style="top:783px;left:1097.90px;letter-spacing:-0.050px">FV-7/2006</span>
<span style="top:783px;left:1178.10px;letter-spacing:-0.050px">FV-7/2006</span>
<span style="top:783px;left:1263.90px;letter-spacing:-0.050px">FV-7/2006</span>
<span style="top:783px;left:1346.10px;letter-spacing:-0.050px">FV-7/2006</span>
<span style="top:783px;left:1440.10px;letter-spacing:-0.050px">FV-7/2006</span>
<span style="top:809px;left:210.50px;letter-spacing:-0.050px">Ano</span>
<span style="top:809px;left:243.70px;letter-spacing:0.150px">24.03.2006</span>
<span style="top:809px;left:314.80px;letter-spacing:-0.050px">FV-7/2006</span>
<span style="top:809px;left:398.50px;letter-spacing:0.029px">Haléřové vyrovnání</span>
<span style="top:809px;right:841.17px;letter-spacing:-0.170px">-0,10 USD</span>
<span style="top:809px;right:742.57px;letter-spacing:-0.170px">-2,10 CZK</span>
<span style="top:809px;left:763.70px">31100</span>
<span style="top:809px;left:827.20px;letter-spacing:-0.250px">000</span>
<span style="top:809px;left:875.70px">64810</span>
<span style="top:809px;left:939.30px;letter-spacing:-0.250px">000</span>
<span style="top:809px;left:997.50px;letter-spacing:0.020px;width:91.6px;overflow:hidden">Teer Corporation</span>
<span style="top:809px;left:1097.90px;letter-spacing:-0.050px">FV-7/2006</span>
<span style="top:809px;left:1178.10px;letter-spacing:-0.050px">FV-7/2006</span>
<span style="top:809px;left:1263.90px;letter-spacing:-0.050px">FV-7/2006</span>
<span style="top:809px;left:1346.10px;letter-spacing:-0.050px">FV-7/2006</span>
<span style="top:809px;left:1440.10px;letter-spacing:-0.050px">FV-7/2006</span>
</div>
<div id="o">
<svg style="left:0;top:0" width="1494" height="823"><line x1="349.5" y1="306.4" x2="314.4" y2="760" stroke="#ef466b" stroke-width="3.2"/><rect x="235.5" y="693.5" width="76" height="85" fill="none" stroke="#ef466b" stroke-width="3"/></svg>
</div>
</div></body></html>
